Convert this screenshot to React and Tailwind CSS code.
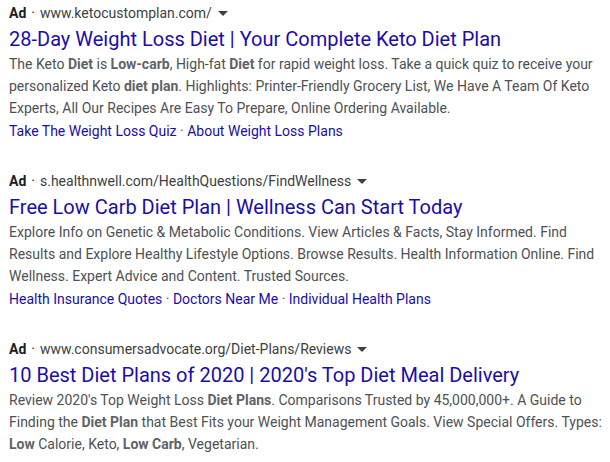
const ads = [
  {
    url: 'www.ketocustomplan.com/',
    title: '28-Day Weight Loss Diet | Your Complete Keto Diet Plan',
    lines: [
      [
        'The Keto ', ['Diet'], ' is ', ['Low-carb'], ', High-fat ', ['Diet'],
        ' for rapid weight loss. Take a quick quiz to receive your',
      ],
      [
        'personalized Keto ', ['diet plan'],
        '. Highlights: Printer-Friendly Grocery List, We Have A Team Of Keto',
      ],
      ['Experts, All Our Recipes Are Easy To Prepare, Online Ordering Available.'],
    ],
    links: ['Take The Weight Loss Quiz', 'About Weight Loss Plans'],
  },
  {
    url: 's.healthnwell.com/HealthQuestions/FindWellness',
    title: 'Free Low Carb Diet Plan | Wellness Can Start Today',
    lines: [
      ['Explore Info on Genetic & Metabolic Conditions. View Articles & Facts, Stay Informed. Find'],
      ['Results and Explore Healthy Lifestyle Options. Browse Results. Health Information Online. Find'],
      ['Wellness. Expert Advice and Content. Trusted Sources.'],
    ],
    links: ['Health Insurance Quotes', 'Doctors Near Me', 'Individual Health Plans'],
  },
  {
    url: 'www.consumersadvocate.org/Diet-Plans/Reviews',
    title: "10 Best Diet Plans of 2020 | 2020's Top Diet Meal Delivery",
    lines: [
      [
        "Review 2020's Top Weight Loss ", ['Diet Plans'],
        '. Comparisons Trusted by 45,000,000+. A Guide to',
      ],
      [
        'Finding the ', ['Diet Plan'],
        ' that Best Fits your Weight Management Goals. View Special Offers. Types:',
      ],
      [['Low'], ' Calorie, Keto, ', ['Low Carb'], ', Vegetarian.'],
    ],
    links: [],
  },
]

function Caret() {
  return (
    <svg className="ml-[6px] inline-block" width="10" height="5" viewBox="0 0 10 5">
      <path d="M0 0 L10 0 L5 5 Z" fill="#3c4043" />
    </svg>
  )
}

function AdResult({ ad }) {
  return (
    <div className="flex flex-col">
      <div className="flex h-[22px] items-center text-[14px] text-[#202124]">
        <span className="font-bold">Ad</span>
        <span className="mx-[5px] text-[#202124]">·</span>
        <span className="text-[#3c4043]">{ad.url}</span>
        <Caret />
      </div>
      <h3 className="h-[29px] text-[20px] leading-[30px] text-[#1a0dab]">{ad.title}</h3>
      <div className="text-[14px] leading-[22px] text-[#4d5156]">
        {ad.lines.map((line, i) => (
          <div key={i} className="whitespace-nowrap">
            {line.map((part, j) =>
              Array.isArray(part) ? (
                <b key={j} className="font-bold text-[#5f6368]">
                  {part[0]}
                </b>
              ) : (
                <span key={j}>{part}</span>
              ),
            )}
          </div>
        ))}
      </div>
      {ad.links.length > 0 && (
        <div className="mt-px text-[14px] leading-[22px] text-[#1a0dab]">
          {ad.links.map((link, i) => (
            <span key={link}>
              {i > 0 && <span className="text-[#4d5156]"> · </span>}
              <span>{link}</span>
            </span>
          ))}
        </div>
      )}
    </div>
  )
}

export default function App() {
  return (
    <main className="min-h-[462px] w-[610px] bg-white pl-[9px] pt-[2px] font-['Roboto','Liberation_Sans',sans-serif]">
      <div className="flex flex-col gap-[28px]">
        {ads.map((ad) => (
          <AdResult key={ad.url} ad={ad} />
        ))}
      </div>
    </main>
  )
}
